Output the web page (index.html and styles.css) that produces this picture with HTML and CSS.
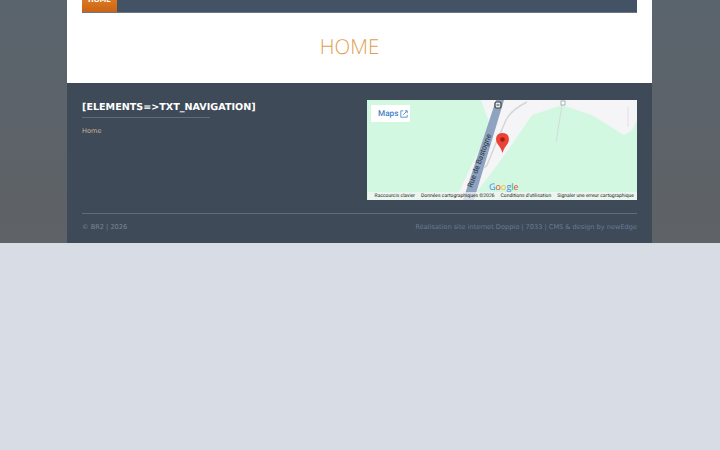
FILE: index.html
```html
<!DOCTYPE html>
<html lang="fr">

<head>
    <meta charset="UTF-8">
    <meta name="viewport" content="width=device-width, initial-scale=1.0">
    <title>Home</title>
    <link rel="stylesheet" href="styles.css">
</head>

<body>
    <div class="site-bg">
        <div class="site-wrap">
            <header class="site-header">
                <nav class="main-nav">
                    <a class="nav-item active" href="#">HOME</a>
                </nav>
                <h1 class="page-title">HOME</h1>
            </header>
            <footer class="site-footer">
                <div class="footer-top">
                    <div class="footer-nav">
                        <h2>[ELEMENTS=&gt;TXT_NAVIGATION]</h2>
                        <a href="#">Home</a>
                    </div>
                    <div class="map">
                        <svg viewBox="0 0 270 100" width="270" height="100">
                            <rect width="270" height="100" fill="#d3f8e2" />
                            <path d="M114 0 L270 0 V20 L265 30 L257 35 L249 30 L225 15 L195 5 L165 15 L139 53 L109 93 L105 100 L88 100 L92 92 L112 50 L122 22 Z" fill="#f5f5f7" />
                            <path d="M129 0 L137 0 L107 100 L96 100 Z" fill="#8ea3bf" />
                            <path d="M160 2 Q144 10 139 20 L129 43 L120 65 L117 68" fill="none" stroke="#d3d6da" stroke-width="1.5" />
                            <path d="M195 5 L189 42" fill="none" stroke="#d5dbdb" stroke-width="1" />
                            <path d="M261 7 V27" fill="none" stroke="#dde0e2" stroke-width="1" />
                            <rect x="128" y="2" width="6" height="6" rx="1.5" fill="#e8eaed" stroke="#3c4043" stroke-width="1.2" />
                            <path d="M129.5 5 H132.5" stroke="#3c4043" stroke-width="1" />
                            <rect x="194" y="1" width="4" height="4" fill="#fff" stroke="#9aa0a6" stroke-width="0.8" />
                            <text class="road" transform="translate(105 88) rotate(-70)">Rue de Bastogne</text>
                            <path d="M135.5 33 C129 33 128 39 130 43 C132 46 134 48 135.5 53 C137 48 139 46 141 43 C143 39 142 33 135.5 33 Z" fill="#ea4335" />
                            <circle cx="135.5" cy="39.5" r="2.3" fill="#a51c12" />
                            <text class="g-logo" x="122" y="90"><tspan fill="#4285f4">G</tspan><tspan fill="#ea4335">o</tspan><tspan fill="#fbbc05">o</tspan><tspan fill="#4285f4">g</tspan><tspan fill="#34a853">l</tspan><tspan fill="#ea4335">e</tspan></text>
                        </svg>
                        <div class="map-btn">
                            <span>Maps</span>
                            <svg viewBox="0 0 10 10" width="8" height="8">
                                <path d="M4 1 H1 V9 H9 V6 M6 1 H9 V4 M9 1 L4 6" fill="none" stroke="#3f7fc4" stroke-width="1" />
                            </svg>
                        </div>
                        <div class="map-legal">
                            <span>Raccourcis clavier</span>
                            <span>Données cartographiques ©2026</span>
                            <span>Conditions d'utilisation</span>
                            <span>Signaler une erreur cartographique</span>
                        </div>
                    </div>
                </div>
                <div class="footer-bottom">
                    <span class="copy">© BR2 | 2026</span>
                    <span class="credits">Réalisation site internet Doppio | 7033 | CMS &amp; design by newEdge</span>
                </div>
            </footer>
        </div>
    </div>
</body>

</html>
```

FILE: styles.css
```css
html,
body {
    margin: 0;
    padding: 0;
}

body {
    height: 450px;
    overflow: hidden;
    background-color: #d8dce4;
    font-family: "DejaVu Sans", sans-serif;
    text-rendering: geometricPrecision;
}

.site-bg {
    height: 243px;
    overflow: hidden;
    background: linear-gradient(#5a646d, #5f6266);
}

.site-wrap {
    width: 585px;
    margin-left: 67px;
    background-color: #fff;
}

.site-header {
    height: 83px;
    padding: 0 15px;
    box-sizing: border-box;
    overflow: hidden;
}

.main-nav {
    display: flex;
    height: 12px;
    background-color: #435265;
    border-bottom: 1px solid #6d7784;
}

.nav-item {
    display: flex;
    align-items: flex-end;
    justify-content: center;
    width: 35px;
    height: 21px;
    padding-bottom: 8px;
    margin-top: -9px;
    box-sizing: border-box;
    background: linear-gradient(#e8862a, #cb6414);
    color: #fff;
    font-size: 6.8px;
    font-weight: bold;
    text-decoration: none;
}

.page-title {
    margin: 21px 20px 0 0;
    text-align: center;
    color: #dea04f;
    font-family: "Open Sans", sans-serif;
    font-size: 20.5px;
    font-weight: 300;
    line-height: 26px;
}

.site-footer {
    height: 160px;
    padding: 17px 15px 0;
    box-sizing: border-box;
    background-color: #3e4a58;
}

.footer-top {
    display: flex;
    justify-content: space-between;
    height: 113px;
    border-bottom: 1px solid #5f6c7c;
}

.footer-nav h2 {
    width: 128px;
    margin: 0 0 8px;
    padding: 1px 0 2px;
    border-bottom: 1px solid #5f6c7c;
    color: #fff;
    font-size: 9.6px;
    line-height: 14px;
    white-space: nowrap;
}

.footer-nav a {
    display: block;
    color: #c9b595;
    font-size: 6.6px;
    font-weight: normal;
    line-height: 10px;
    text-decoration: none;
}

.map {
    position: relative;
    width: 270px;
    height: 100px;
}

.map > svg {
    display: block;
}

.road {
    font-family: Roboto, sans-serif;
    font-size: 7.5px;
    fill: #2a333d;
}

.g-logo {
    font-family: "Open Sans", sans-serif;
    font-size: 9px;
}

.map-btn {
    position: absolute;
    top: 5px;
    left: 4px;
    display: flex;
    align-items: center;
    gap: 2px;
    width: 39px;
    height: 17px;
    padding-left: 7px;
    box-sizing: border-box;
    background-color: #fff;
    color: #3f7fc4;
    font-family: Roboto, sans-serif;
    font-size: 8.2px;
    font-weight: 500;
}

.map-legal {
    position: absolute;
    right: 0;
    bottom: 0;
    display: flex;
    gap: 6px;
    height: 8px;
    padding: 0 3px 0 7px;
    background-color: rgba(245, 245, 245, 0.7);
    color: #222;
    font-family: Roboto, sans-serif;
    font-size: 5px;
    line-height: 8px;
    white-space: nowrap;
}

.footer-bottom {
    display: flex;
    justify-content: space-between;
    padding-top: 8px;
    font-size: 6.6px;
    line-height: 10px;
}

.copy {
    color: #7a8794;
}

.credits {
    color: #667d94;
}
```
